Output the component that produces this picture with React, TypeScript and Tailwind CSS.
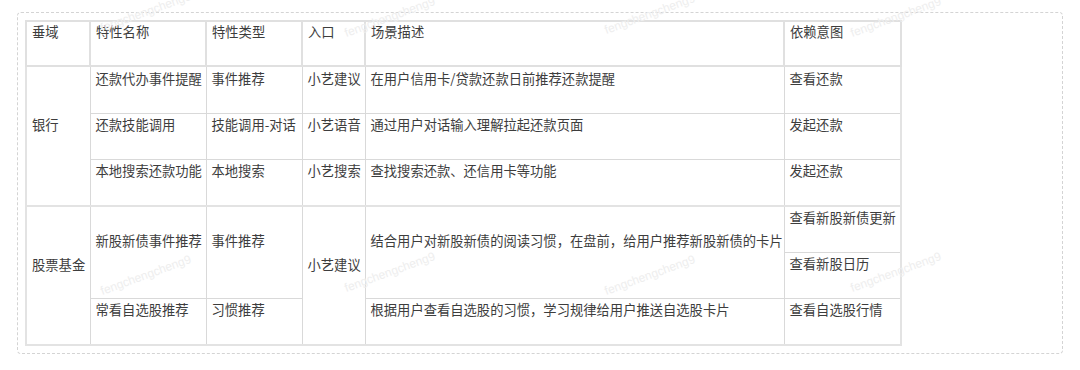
import React from 'react'

type Cell = { text: string; rowSpan?: number }

const headers = ['垂域', '特性名称', '特性类型', '入口', '场景描述', '依赖意图']

// each row lists only the cells that start in it
const rows: { h: string; groupTop?: boolean; cells: Cell[] }[] = [
  {
    h: 'h-[47px]',
    cells: [
      { text: '银行', rowSpan: 3 },
      { text: '还款代办事件提醒' },
      { text: '事件推荐' },
      { text: '小艺建议' },
      { text: '在用户信用卡/贷款还款日前推荐还款提醒' },
      { text: '查看还款' },
    ],
  },
  {
    h: 'h-[46px]',
    cells: [
      { text: '还款技能调用' },
      { text: '技能调用-对话' },
      { text: '小艺语音' },
      { text: '通过用户对话输入理解拉起还款页面' },
      { text: '发起还款' },
    ],
  },
  {
    h: 'h-[47px]',
    cells: [
      { text: '本地搜索还款功能' },
      { text: '本地搜索' },
      { text: '小艺搜索' },
      { text: '查找搜索还款、还信用卡等功能' },
      { text: '发起还款' },
    ],
  },
  {
    h: 'h-[46px]',
    groupTop: true,
    cells: [
      { text: '股票基金', rowSpan: 3 },
      { text: '新股新债事件推荐', rowSpan: 2 },
      { text: '事件推荐', rowSpan: 2 },
      { text: '小艺建议', rowSpan: 3 },
      { text: '结合用户对新股新债的阅读习惯，在盘前，给用户推荐新股新债的卡片', rowSpan: 2 },
      { text: '查看新股新债更新' },
    ],
  },
  {
    h: 'h-[46px]',
    cells: [{ text: '查看新股日历' }],
  },
  {
    h: 'h-[47px]',
    cells: [
      { text: '常看自选股推荐' },
      { text: '习惯推荐' },
      { text: '根据用户查看自选股的习惯，学习规律给用户推送自选股卡片' },
      { text: '查看自选股行情' },
    ],
  },
]

const marks = [
  'left-[98px] top-[3px]',
  'left-[342px] top-[8px]',
  'left-[602px] top-[5px]',
  'left-[848px] top-[8px]',
  'left-[98px] top-[266px]',
  'left-[342px] top-[263px]',
  'left-[602px] top-[266px]',
  'left-[848px] top-[263px]',
]

export default function App() {
  return (
    <div className="relative w-[1080px] h-[370px] bg-white overflow-hidden font-['Noto_Sans_CJK_SC','Noto_Sans',sans-serif] text-[#3d3d3d]">
      <div className="ml-[17px] mt-[12px] w-[1046px] h-[342px] border border-dashed border-[#d4d4d4] rounded-[4px] pl-[7px] pt-[7px]">
        <table className="table-fixed border-collapse w-[875px] border-2 border-[#e3e3e3] text-[13.3px]">
          <colgroup>
            <col className="w-[64px]" />
            <col className="w-[116px]" />
            <col className="w-[96px]" />
            <col className="w-[63px]" />
            <col className="w-[419px]" />
            <col className="w-[117px]" />
          </colgroup>
          <thead>
            <tr className="h-[45px]">
              {headers.map((t) => (
                <th
                  key={t}
                  className="border-2 border-[#e0e0e0] px-[5px] align-middle text-left font-normal"
                >
                  <div className="relative -top-[2px] leading-5 pb-5 whitespace-nowrap">{t}</div>
                </th>
              ))}
            </tr>
          </thead>
          <tbody>
            {rows.map((r, i) => (
              <tr key={i} className={r.h}>
                {r.cells.map((c, j) => (
                  <td
                    key={j}
                    rowSpan={c.rowSpan}
                    className={
                      r.groupTop
                        ? 'border border-t-2 border-[#d9d9d9] border-t-[#e3e3e3] px-[5px] align-middle'
                        : 'border border-[#d9d9d9] px-[5px] align-middle'
                    }
                  >
                    <div className="relative -top-[1px] leading-5 pb-5 whitespace-nowrap">{c.text}</div>
                  </td>
                ))}
              </tr>
            ))}
          </tbody>
        </table>
      </div>

      {/* watermark */}
      {marks.map((m) => (
        <span
          key={m}
          className={`absolute ${m} pointer-events-none -rotate-[20deg] font-['Liberation_Sans',sans-serif] text-[12px] text-[#eeeeee]`}
        >
          fengchengcheng9
        </span>
      ))}
    </div>
  )
}
